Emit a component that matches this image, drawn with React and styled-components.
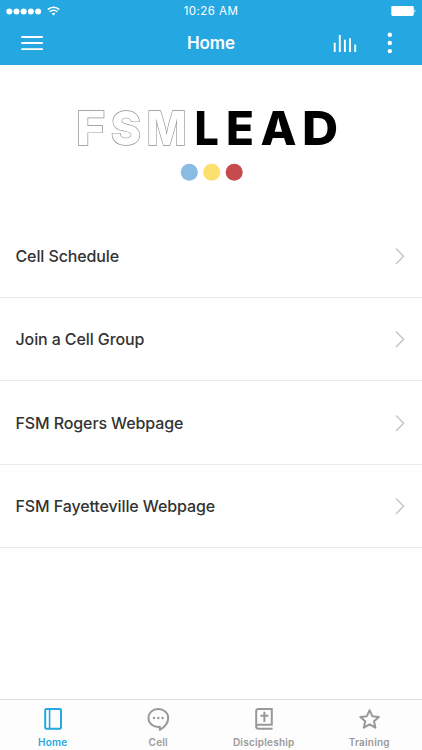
import React from 'react';
import styled, { createGlobalStyle } from 'styled-components';

const GlobalStyle = createGlobalStyle`
  * {
    box-sizing: border-box;
  }
  body {
    margin: 0;
    background-color: #ffffff;
    font-family: Inter, 'Liberation Sans', sans-serif;
  }
  svg {
    display: block;
  }
`;

const Container = styled.div`
  height: 750px;
  width: 422px;
  display: grid;
  grid-template-rows: 65px 149px 1fr 51px;
  background-color: #ffffff;
  overflow: hidden;
`;

const Header = styled.header`
  display: grid;
  grid-template-rows: 21px 44px;
  background-color: #25a7e1;
  color: #ffffff;
`;

const StatusBar = styled.div`
  display: grid;
  grid-template-columns: 1fr 100px 1fr;
  align-items: center;
  padding: 0 6px;
`;

const Signal = styled.div`
  display: flex;
  align-items: center;
  gap: 5px;
`;

const Time = styled.div`
  text-align: center;
  font-size: 11.5px;
  line-height: 21px;
  letter-spacing: 0.45px;
  padding-top: 1px;
`;

const Battery = styled.div`
  justify-self: end;
`;

const NavBar = styled.div`
  display: grid;
  grid-template-columns: 100px 1fr 100px;
  align-items: center;
`;

const NavLeft = styled.div`
  padding-left: 21px;
`;

const Title = styled.div`
  text-align: center;
  font-size: 17px;
  font-weight: 600;
  line-height: 44px;
  letter-spacing: -0.1px;
`;

const NavRight = styled.div`
  display: flex;
  align-items: center;
  gap: 30px;
  padding-left: 11px;
`;

const Banner = styled.div`
  padding-top: 35px;
`;

const LogoSvg = styled.svg`
  will-change: transform;
`;

const LogoText = styled.text`
  font-family: Inter, 'Liberation Sans', sans-serif;
  font-size: 46.8px;
  font-weight: 800;
  fill: ${props => (props.$outline ? '#ffffff' : '#000000')};
  stroke: ${props => (props.$outline ? '#8c8c8c' : 'none')};
  stroke-width: 1.3px;
  paint-order: stroke;
`;

const List = styled.div`
  display: flex;
  flex-direction: column;
`;

const ListItem = styled.div`
  height: 83.5px;
  padding: 1px 17px 0 15.5px;
  display: flex;
  align-items: center;
  justify-content: space-between;
  border-bottom: 1px solid #ebebec;
  font-size: 16px;
  font-weight: 500;
  color: #333333;
  cursor: pointer;
`;

const Label = styled.span`
  letter-spacing: -0.11px;
`;

const TabBar = styled.nav`
  display: grid;
  grid-template-columns: repeat(4, 1fr);
  border-top: 1px solid #dedede;
  background-color: #fdfdfd;
`;

const Tab = styled.div`
  display: flex;
  flex-direction: column;
  align-items: center;
  padding-top: 7px;
  gap: 5px;
  font-size: 10px;
  line-height: 13px;
  font-weight: 600;
  letter-spacing: 0.22px;
  color: ${props => (props.$active ? '#25a7e1' : '#999999')};
  cursor: pointer;
`;

// x is the left edge of the letter, scale its horizontal stretch
const letters = [
  { char: 'F', x: 76, scale: 1.07, outline: true },
  { char: 'S', x: 110.8, scale: 0.98, outline: true },
  { char: 'M', x: 146.8, scale: 0.9, outline: true },
  { char: 'L', x: 194.6, scale: 0.92 },
  { char: 'E', x: 226, scale: 0.98 },
  { char: 'A', x: 260.5, scale: 1.0 },
  { char: 'D', x: 301.9, scale: 1.07 },
];

const items = [
  'Cell Schedule',
  'Join a Cell Group',
  'FSM Rogers Webpage',
  'FSM Fayetteville Webpage',
];

function WifiIcon() {
  return (
    <svg width="13" height="10" viewBox="0 0 13 10" fill="none" stroke="currentColor" strokeWidth="1.5">
      <path d="M0.7 3.6a8.2 8.2 0 0 1 11.6 0" />
      <path d="M2.7 5.8a5.4 5.4 0 0 1 7.6 0" />
      <path d="M6.5 9.6L4.6 7.6a2.7 2.7 0 0 1 3.8 0z" fill="currentColor" stroke="none" />
    </svg>
  );
}

function Logo() {
  return (
    <LogoSvg width="422" height="90" viewBox="0 0 422 90">
      {letters.map(({ char, x, scale, outline }) => (
        <LogoText key={char} $outline={outline} transform={`translate(${x} 45.2) scale(${scale} 1)`}>
          {char}
        </LogoText>
      ))}
      <circle cx="189.3" cy="72.3" r="8.5" fill="#8abbe2" />
      <circle cx="211.7" cy="72.3" r="8.5" fill="#fbe06d" />
      <circle cx="234.2" cy="72.3" r="8.5" fill="#c64b4e" />
    </LogoSvg>
  );
}

function Chevron() {
  return (
    <svg width="10" height="18" viewBox="0 0 10 18" fill="none" stroke="#c4c4c8" strokeWidth="1.4">
      <path d="M1 1.5L8.6 9.2L1 16.9" />
    </svg>
  );
}

function TabIcon({ children }) {
  return (
    <svg width="24" height="24" viewBox="0 0 24 24" fill="none" stroke="currentColor" strokeWidth="2">
      {children}
    </svg>
  );
}

function App() {
  return (
    <Container>
      <GlobalStyle />
      <Header>
        <StatusBar>
          <Signal>
            <svg width="36" height="7" viewBox="0 0 36 7" fill="currentColor">
              {[3.3, 10.5, 17.7, 24.9, 32.1].map(x => (
                <circle key={x} cx={x} cy="3.6" r="3" />
              ))}
            </svg>
            <WifiIcon />
          </Signal>
          <Time>10:26 AM</Time>
          <Battery>
            <svg width="25" height="10" viewBox="0 0 25 10" fill="currentColor">
              <rect x="0.3" y="0" width="22.5" height="10" rx="1.4" />
              <path d="M23.5 3.3a2 2 0 0 1 0 3.4z" />
            </svg>
          </Battery>
        </StatusBar>
        <NavBar>
          <NavLeft>
            <svg width="22" height="16" viewBox="0 0 22 16" stroke="currentColor" strokeWidth="1.9" strokeLinecap="round">
              <path d="M1 2h20.2M1 8h20.2M1 14.1h20.2" />
            </svg>
          </NavLeft>
          <Title>Home</Title>
          <NavRight>
            <svg width="24" height="18" viewBox="0 0 24 18" stroke="currentColor" strokeWidth="1.9">
              <path d="M1.7 8.8V18M6.8 1V18M11.9 5.7V18M17 4.3V18M22.2 10.4V18" />
            </svg>
            <svg width="6" height="22" viewBox="0 0 6 22" fill="currentColor">
              <circle cx="2.8" cy="2.8" r="2.2" />
              <circle cx="2.8" cy="11" r="2.2" />
              <circle cx="2.8" cy="19.1" r="2.2" />
            </svg>
          </NavRight>
        </NavBar>
      </Header>
      <Banner>
        <Logo />
      </Banner>
      <List>
        {items.map(item => (
          <ListItem key={item}>
            <Label>{item}</Label>
            <Chevron />
          </ListItem>
        ))}
      </List>
      <TabBar>
        <Tab $active>
          <TabIcon>
            <rect x="4.2" y="2" width="15.8" height="19.8" rx="1.2" />
            <path d="M8.6 2v19.8" strokeWidth="1.6" />
          </TabIcon>
          Home
        </Tab>
        <Tab>
          <TabIcon>
            <path
              d="M12.2 2C6.4 2 2.4 6 2.4 11s4 8.8 9.6 8.9c.7 0 1.3 0 1.8-.1v3c2.8-1.6 8.4-5.7 8.4-11.8 0-5-4.2-9-10-9z"
              strokeLinejoin="round"
            />
            <g fill="currentColor" stroke="none">
              <circle cx="8" cy="11" r="1.2" />
              <circle cx="12.3" cy="11" r="1.2" />
              <circle cx="16.6" cy="11" r="1.2" />
            </g>
          </TabIcon>
          Cell
        </Tab>
        <Tab>
          <TabIcon>
            <path d="M20.6 21.8H6.5a2.3 2.3 0 0 1-2.3-2.3V4.3A2.3 2.3 0 0 1 6.5 2h13.3v15.8H6.5a2 2 0 0 0-2.2 1.6" />
            <path d="M12.4 4.7v10.4M8.4 8.8h8" />
          </TabIcon>
          Discipleship
        </Tab>
        <Tab>
          <TabIcon>
            <path d="M12.6 3.2l2.7 6 6.6.7-4.9 4.4 1.4 6.4-5.8-3.3-5.8 3.3 1.4-6.4-4.9-4.4 6.6-.7z" strokeLinejoin="round" />
          </TabIcon>
          Training
        </Tab>
      </TabBar>
    </Container>
  );
}

export default App;
